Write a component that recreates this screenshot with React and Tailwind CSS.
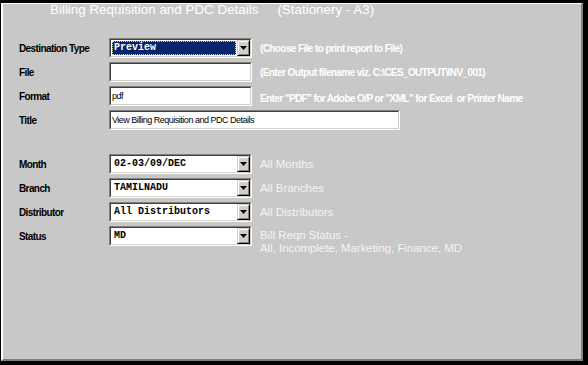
import React from "react";

const sans = "font-['Liberation_Sans',Arial,sans-serif]";
const mono = "font-['Liberation_Mono','Courier_New',monospace]";

function Sunken({ width, children }) {
  return (
    <div
      className={`h-[20px] border border-t-[#808080] border-l-[#808080] border-b-white border-r-white ${width}`}
    >
      <div className="h-full border border-t-[#404040] border-l-[#404040] border-b-[#d4d0c8] border-r-[#d4d0c8] bg-white flex items-center">
        {children}
      </div>
    </div>
  );
}

function DropButton() {
  return (
    <div className="h-full w-[13px] border border-t-[#d4d0c8] border-l-[#d4d0c8] border-b-black border-r-black">
      <div className="h-full border border-t-white border-l-white border-b-[#808080] border-r-[#808080] bg-[#d4d0c8] flex items-center justify-center">
        <svg width="7" height="4" viewBox="0 0 7 4">
          <path d="M0 0h7L3.5 4z" fill="#000" />
        </svg>
      </div>
    </div>
  );
}

function Select({ value, focused }) {
  return (
    <Sunken width="w-[143px]">
      <div className="flex-1 h-full p-px flex">
        {focused ? (
          <div className="flex-1 flex items-center bg-[#0a246a] border border-dotted border-[#d8d8a0] pl-[1px]">
            <span className={`${mono} text-[10px] font-bold text-white leading-none`}>{value}</span>
          </div>
        ) : (
          <div className="flex-1 flex items-center pl-[2px]">
            <span className={`${mono} text-[10px] font-bold text-black leading-none`}>{value}</span>
          </div>
        )}
      </div>
      <DropButton />
    </Sunken>
  );
}

function TextBox({ value, width = "w-[143px]" }) {
  return (
    <Sunken width={width}>
      <span className={`${sans} pl-[1px] text-[9px] tracking-[-0.5px] text-black leading-none`}>{value}</span>
    </Sunken>
  );
}

function Label({ children }) {
  return (
    <div className={`${sans} w-[90px] shrink-0 text-[10px] font-bold tracking-[-0.6px] text-black`}>
      {children}
    </div>
  );
}

function Hint({ children }) {
  return (
    <div className={`${sans} ml-[8px] text-[10px] font-bold tracking-[-0.6px] text-white whitespace-nowrap`}>
      {children}
    </div>
  );
}

function Note({ children }) {
  return (
    <div className={`${sans} ml-[8px] text-[11.4px] text-[#f4f4f4] leading-[13px] whitespace-nowrap`}>
      {children}
    </div>
  );
}

export default function App() {
  return (
    <div className="w-[588px] h-[365px] bg-black border-t-[3px] border-l-[1px] border-r-[5px] border-b-[4px] border-black">
      <div className="h-full border-t border-l-2 border-t-white border-l-white border-r-2 border-b-2 border-r-[#808080] border-b-[#808080] bg-[#c8c8c8] pl-[16px]">
        {/* Header */}
        <div className={`${sans} pl-[31px] text-[13.4px] leading-[11px] text-white whitespace-nowrap`}>
          Billing Requisition and PDC Details
          <span className="ml-[19px]">(Stationery - A3)</span>
        </div>

        {/* Output options */}
        <div className="mt-[21px]">
          <div className="flex items-center h-[24px]">
            <Label>Destination Type</Label>
            <Select value="Preview" focused />
            <Hint>(Choose File to print report to File)</Hint>
          </div>
          <div className="flex items-center h-[24px]">
            <Label>File</Label>
            <TextBox value="" />
            <Hint>(Enter Output filename viz. C:\CES_OUTPUT\INV_001)</Hint>
          </div>
          <div className="flex items-center h-[24px]">
            <Label>Format</Label>
            <TextBox value="pdf" />
            <Hint>
              <span className="relative top-[2px]">
                Enter "PDF" for Adobe O/P or "XML" for Excel&nbsp; or Printer Name
              </span>
            </Hint>
          </div>
          <div className="flex items-center h-[24px]">
            <Label>Title</Label>
            <TextBox value="View Billing Requisition and PDC Details" width="w-[291px]" />
          </div>
        </div>

        {/* Filters */}
        <div className="mt-[20px]">
          <div className="flex items-center h-[24px]">
            <Label>Month</Label>
            <Select value="02-03/09/DEC" />
            <Note>All Months</Note>
          </div>
          <div className="flex items-center h-[24px]">
            <Label>Branch</Label>
            <Select value="TAMILNADU" />
            <Note>All Branches</Note>
          </div>
          <div className="flex items-center h-[24px]">
            <Label>Distributor</Label>
            <Select value="All Distributors" />
            <Note>All Distributors</Note>
          </div>
          <div className="flex items-start h-[24px]">
            <div className="h-[24px] flex items-center">
              <Label>Status</Label>
            </div>
            <div className="pt-[2px]">
              <Select value="MD" />
            </div>
            <div className="pt-[5px]">
              <Note>
                Bill Reqn Status -
                <br />
                All, Incomplete, Marketing, Finance, MD
              </Note>
            </div>
          </div>
        </div>
      </div>
    </div>
  );
}
